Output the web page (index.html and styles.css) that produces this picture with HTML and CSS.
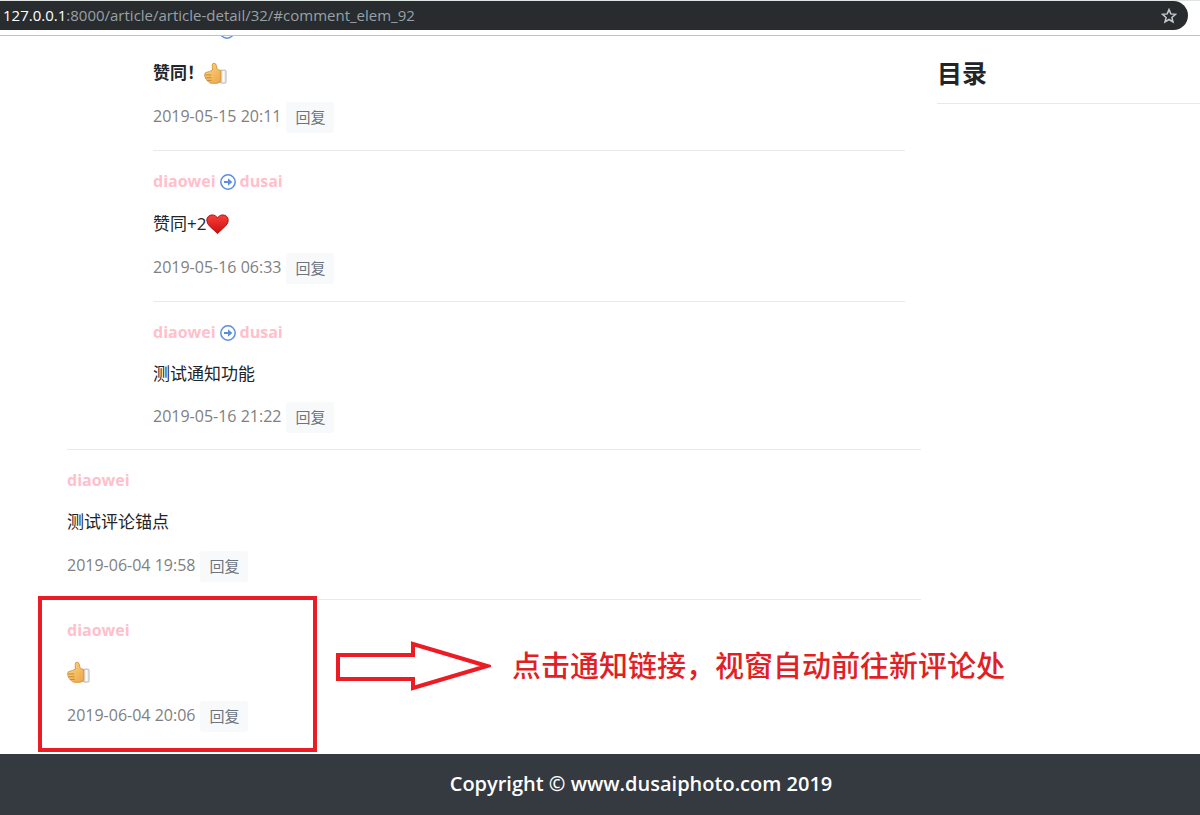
FILE: index.html
```html
<!DOCTYPE html>
<html lang="zh-CN">
<head>
<meta charset="utf-8">
<title>article-detail</title>
<link rel="stylesheet" href="styles.css">
</head>
<body>
<svg class="defs" aria-hidden="true">
  <defs>
    <linearGradient id="skin" x1="0" y1="0" x2="1" y2="1">
      <stop offset="0" stop-color="#ffd983"/><stop offset="1" stop-color="#eba547"/>
    </linearGradient>
    <linearGradient id="red" x1="0" y1="0" x2="0" y2="1">
      <stop offset="0" stop-color="#f5403a"/><stop offset="1" stop-color="#cf0d0d"/>
    </linearGradient>
    <symbol id="thumb" viewBox="0 0 24 24">
      <path d="M17.500 8.500h4.500q1 0 1 1v11.500q0 1-1 1h-4.500z" fill="#ededed" stroke="#b5b5b5"/>
      <path d="M20.500 9.500v11.500" stroke="#fff"/>
      <path d="M8.800 8.500 8.600 3.500q0-2.200 1.900-2.200 1.700 0 2.300 2.200l.8 3.200q.6 1.600 3.900 2.300v11.500q-2 1.700-5 1.700H7.700q-2-.1-2.900-1.600-1.500-.5-1.900-2-1.500-.8-1.500-2.500-.7-1-.7-2.800Q.6 11.500 2 11q4-.8 6.800-2.500z" fill="url(#skin)" stroke="#d59740"/>
      <path d="M1.200 13.500h6.300M1.800 16.400h5.800M3.200 19.200h4.800" stroke="#c98331" fill="none"/>
    </symbol>
    <symbol id="heart" viewBox="0 0 24 24">
      <path d="M12 21.500Q9.500 19 4.500 14.500.8 11.200.8 7.700C.8 4.300 3.300 2 6.500 2 9 2 11 3.400 12 5.200 13 3.400 15 2 17.500 2c3.200 0 5.700 2.300 5.700 5.700 0 3.500-3.700 6.800-5 8Q14 19.500 12 21.500z" fill="url(#red)" stroke="#a81212"/>
    </symbol>
    <symbol id="arrow" viewBox="0 0 16 16">
      <circle cx="8" cy="8" r="7.200" fill="none" stroke="#5b8ee0" stroke-width="1.500"/>
      <path d="M4 7h4V4.300L12.300 8 8 11.700V9H4z" fill="#5b8ee0"/>
    </symbol>
  </defs>
</svg>

<header class="browser">
  <div class="address">
    <span class="url"><b class="host">127.0.0.1</b>:8000/article/article-detail/32/#comment_elem_92</span>
    <button class="star" aria-label="收藏">
      <svg viewBox="0 0 16 16"><path d="M8 1.600 9.800 5.900 14.500 6.300 10.900 9.400 12 14 8 11.500 4 14 5.100 9.400 1.500 6.300 6.200 5.900z" fill="none" stroke="#c6cacd" stroke-width="1.500"/></svg>
    </button>
  </div>
</header>

<main class="page">
  <section class="comments">
    <div class="replies">
      <article class="comment">
        <p class="who who-cut"><svg class="arrow"><use href="#arrow"/></svg></p>
        <p class="text"><strong>赞同！</strong><svg class="emoji"><use href="#thumb"/></svg></p>
        <div class="meta"><time>2019-05-15 20:11</time><button class="reply">回复</button></div>
      </article>
      <article class="comment">
        <p class="who"><a href="#">diaowei</a><svg class="arrow"><use href="#arrow"/></svg><a href="#">dusai</a></p>
        <p class="text">赞同+2<svg class="emoji"><use href="#heart"/></svg></p>
        <div class="meta"><time>2019-05-16 06:33</time><button class="reply">回复</button></div>
      </article>
      <article class="comment last-reply">
        <p class="who"><a href="#">diaowei</a><svg class="arrow"><use href="#arrow"/></svg><a href="#">dusai</a></p>
        <p class="text">测试通知功能</p>
        <div class="meta"><time>2019-05-16 21:22</time><button class="reply">回复</button></div>
      </article>
    </div>
    <article class="comment top-level">
      <p class="who"><a href="#">diaowei</a></p>
      <p class="text">测试评论锚点</p>
      <div class="meta"><time>2019-06-04 19:58</time><button class="reply">回复</button></div>
    </article>
    <article class="comment newest" id="comment_elem_92">
      <p class="who"><a href="#">diaowei</a></p>
      <p class="text"><svg class="emoji"><use href="#thumb"/></svg></p>
      <div class="meta"><time>2019-06-04 20:06</time><button class="reply">回复</button></div>
      <div class="frame"></div>
      <div class="note">
        <svg class="pointer" viewBox="0 0 156 52"><path d="M3 15H78V4L152 26 78 48V39H3z" fill="none" stroke="#ec1c24" stroke-width="4"/></svg>
        <span>点击通知链接，视窗自动前往新评论处</span>
      </div>
    </article>
  </section>
  <aside class="toc">
    <h2>目录</h2>
  </aside>
</main>

<footer class="footer">Copyright © www.dusaiphoto.com 2019</footer>
</body>
</html>
```
FILE: styles.css
```css
* { box-sizing: border-box; }

body {
  margin: 0;
  min-height: 100vh;
  display: flex;
  flex-direction: column;
  overflow-x: hidden;
  background: #fff;
  color: #212529;
  font: 16px/25px "Open Sans", "Noto Sans CJK SC", sans-serif;
}

p, h2 { margin: 0; }
button { border: 0; font: inherit; cursor: pointer; }
.defs { position: absolute; width: 0; height: 0; }

.browser {
  padding: 1px 12px 5px 0;
  border-bottom: 1px solid #bfc1c2;
  background: linear-gradient(#dfe5e3 1px, #fff 1px);
}
.address {
  height: 29px;
  display: flex;
  align-items: center;
  justify-content: space-between;
  padding: 0 11px 0 3px;
  border-radius: 0 15px 15px 0;
  background: #282c2f;
  color: #9aa0a6;
  font-size: 15px;
}
.host { color: #fff; font-weight: 400; }
.star { width: 16px; height: 16px; padding: 0; background: none; }
.star svg { display: block; }

.page {
  display: grid;
  grid-template-columns: 1fr 263px;
  gap: 16px;
  padding-left: 67px;
  overflow: hidden;
}
.comments { min-width: 0; margin-top: -36px; }
.replies { padding: 0 16px 0 86px; }

.comment {
  padding: 18px 0 17px;
  border-bottom: 1px solid #e8e9ea;
}
.last-reply { border-bottom: 0; padding-bottom: 16px; }
.top-level { border-top: 1px solid #e8e9ea; }
.newest { position: relative; border-bottom: 0; padding-bottom: 22px; }

.who {
  display: flex;
  align-items: center;
  gap: 4px;
  height: 25px;
  font-weight: 700;
}
.who a { color: #ffc0cb; text-decoration: none; }
.who-cut { padding-left: 66px; }
.arrow { width: 16px; height: 16px; }

.text {
  display: flex;
  align-items: center;
  height: 25px;
  margin: 17px 0;
  font-size: 17px;
}
.emoji { width: 23px; height: 23px; margin-top: 2px; }

.meta { display: flex; gap: 5px; color: #808080; }
.meta time { line-height: 28px; }
.reply {
  height: 31px;
  padding: 0 9px;
  border-radius: 3px;
  background: #f8f9fa;
  color: #6c757d;
  font-size: 15px;
}
.top-level .text, .newest .text { margin: 16px 0 17px; }
.last-reply .text { margin: 16px 0; }

.frame {
  position: absolute;
  left: -29px;
  top: -4px;
  width: 279px;
  height: 156px;
  border: 4px solid #ec1c24;
}
.note {
  position: absolute;
  left: 268px;
  top: 40px;
  display: flex;
  align-items: center;
  gap: 21px;
  color: #e01f26;
  font-size: 29px;
  font-weight: 500;
  line-height: 52px;
  white-space: nowrap;
}
.pointer { width: 156px; height: 52px; }

.toc h2 {
  padding: 20px 0 13px;
  border-bottom: 1px solid #e8e9ea;
  font-size: 25px;
  line-height: 34px;
}

.footer {
  flex: 1;
  padding: 15px 0 15px 82px;
  background: #343a40;
  color: #fff;
  font-size: 20px;
  font-weight: 600;
  line-height: 30px;
  text-align: center;
}
```
